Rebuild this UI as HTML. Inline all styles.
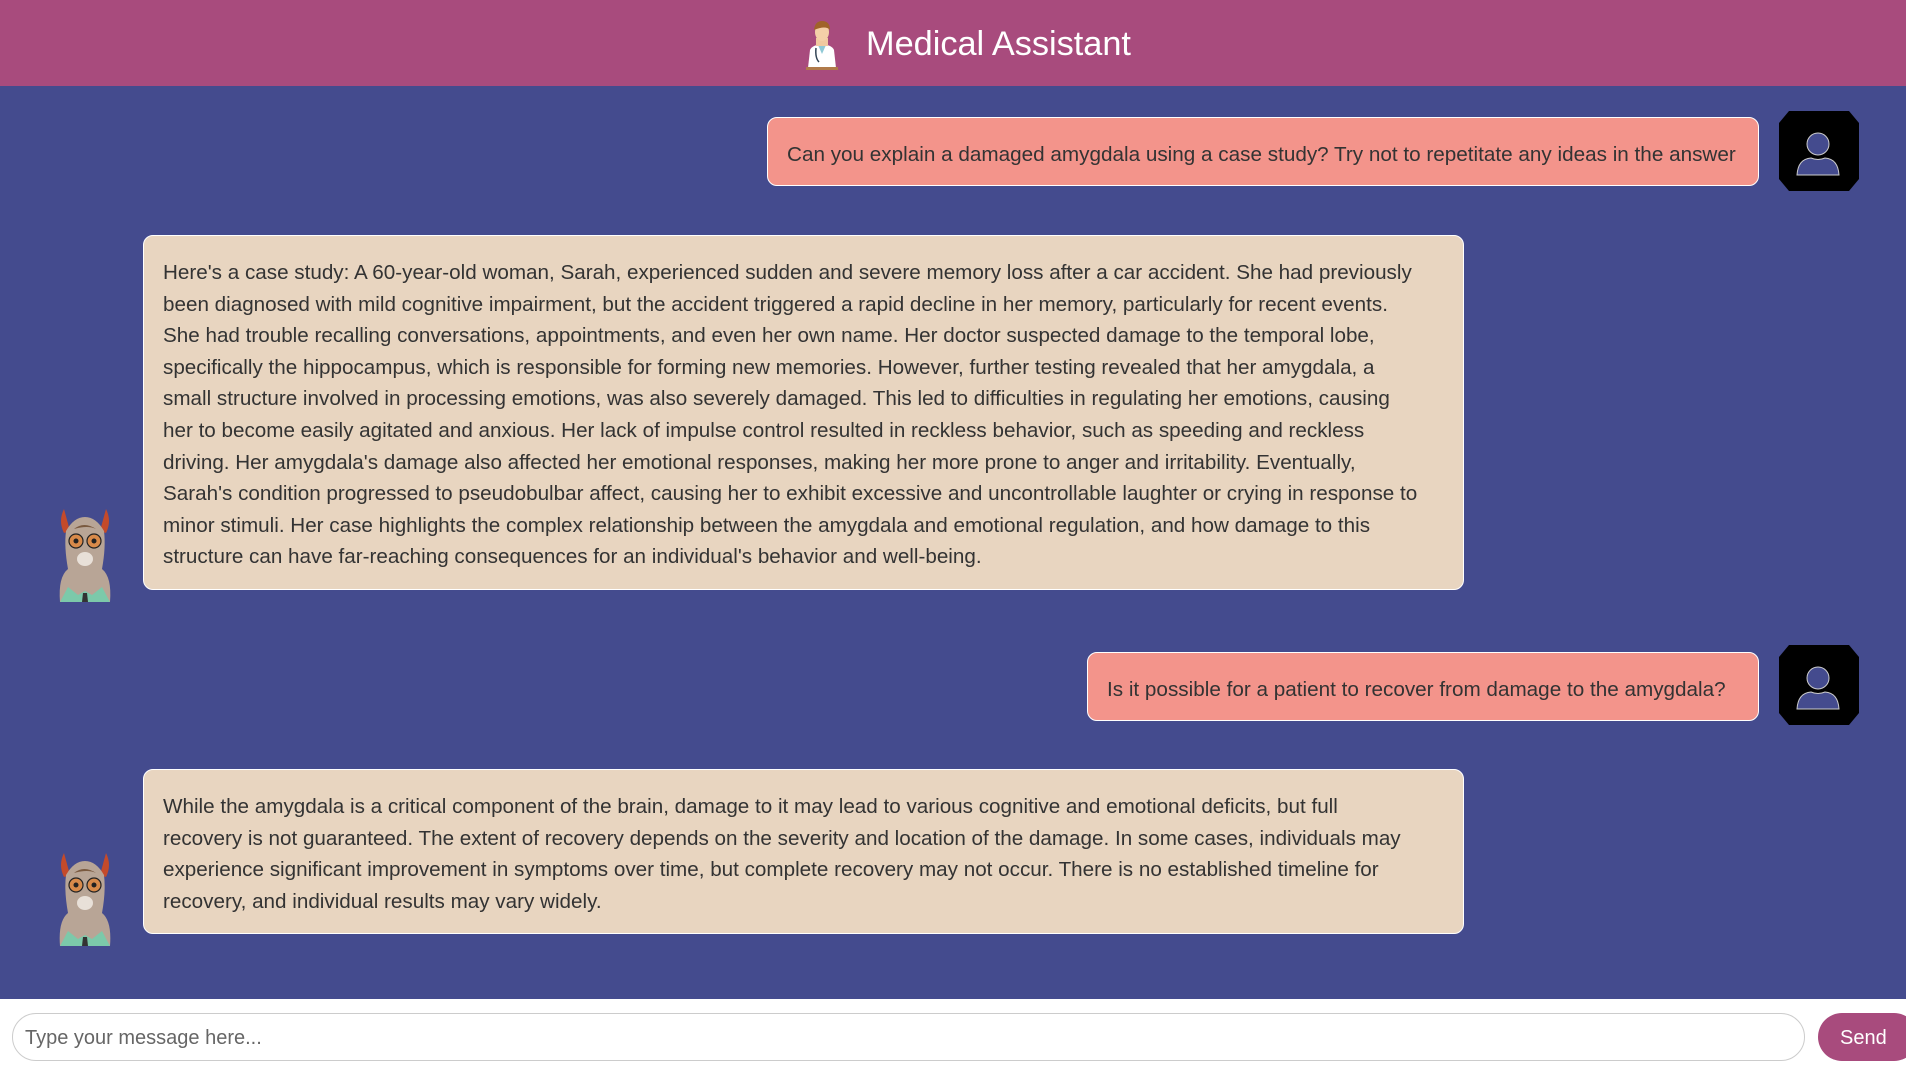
<!DOCTYPE html>
<html><head><meta charset="utf-8"><style>
*{margin:0;padding:0;box-sizing:border-box}
body{width:1906px;height:1069px;overflow:hidden;background:#fff;font-family:"Liberation Sans",sans-serif;position:relative}
.hdr{position:absolute;left:0;top:0;width:1906px;height:86px;background:#a84b7d}
.title{position:absolute;left:866px;top:22px;color:#fff;font-size:34.3px;line-height:44px}
.chat{position:absolute;left:0;top:86px;width:1906px;height:913px;background:#444b8e}
.ub{position:absolute;background:#f3948b;border:1.5px solid #fff;border-radius:10px;color:#333;font-size:20.7px;white-space:nowrap;display:flex;align-items:center;padding-left:19px;padding-top:6px}
.bb{position:absolute;background:#e8d5c0;border:1.5px solid #fff;border-radius:10px;color:#333;font-size:20.65px;line-height:31.6px;white-space:nowrap;padding:21px 0 0 19px}
.av{position:absolute;width:80px;height:80px}
.ll{position:absolute;width:62px;height:95px}
.inp{position:absolute;left:12px;top:1013px;width:1793px;height:48px;border:1.5px solid #ccc;border-radius:24px;color:#666;font-size:20px;line-height:48px;padding-left:12px}
.send{position:absolute;left:1818px;top:1013px;width:100px;height:48px;border-radius:24px;background:#a84b7d;color:#fff;font-size:20px;line-height:50px;padding-left:22px}
</style></head><body>
<div class="hdr">
<svg style="position:absolute;left:802px;top:18px" width="40" height="52" viewBox="0 0 40 52">
<path d="M6 50 L8 32 Q10 27 20 26 Q30 27 32 32 L34 50Z" fill="#fff"/>
<path d="M16 27 L20 36 L24 27Z" fill="#8fc9d6"/>
<path d="M14 30 Q13 40 17 44" stroke="#345" stroke-width="1.5" fill="none"/>
<rect x="14" y="20" width="12" height="8" fill="#f1c9a0"/>
<ellipse cx="20" cy="14" rx="7" ry="9" fill="#f4cfa8"/>
<path d="M12 12 Q13 3 20 3 Q28 3 28 12 Q24 7 12 12Z" fill="#a0632a"/>
<rect x="4" y="49" width="32" height="3" fill="#b07a4a"/>
</svg>
<div class="title">Medical Assistant</div>
</div>
<div class="chat"></div>

<div class="ub" style="left:767px;top:117px;width:992px;height:69px">Can you explain a damaged amygdala using a case study? Try not to repetitate any ideas in the answer</div>
<svg class="av" style="left:1779px;top:111px" viewBox="0 0 80 80"><path d="M10 0H70L80 12V68L70 80H10L0 68V12Z" fill="#000"/><circle cx="39" cy="33" r="11" fill="#444b8e" stroke="#ccc" stroke-width="1"/><path d="M18 64 Q19 48 32 47 Q39 50 46 47 Q59 48 60 64Z" fill="#444b8e" stroke="#ccc" stroke-width="1"/></svg>

<div class="bb" style="left:143px;top:235px;width:1321px;height:355px">Here's a case study: A 60-year-old woman, Sarah, experienced sudden and severe memory loss after a car accident. She had previously<br>been diagnosed with mild cognitive impairment, but the accident triggered a rapid decline in her memory, particularly for recent events.<br>She had trouble recalling conversations, appointments, and even her own name. Her doctor suspected damage to the temporal lobe,<br>specifically the hippocampus, which is responsible for forming new memories. However, further testing revealed that her amygdala, a<br>small structure involved in processing emotions, was also severely damaged. This led to difficulties in regulating her emotions, causing<br>her to become easily agitated and anxious. Her lack of impulse control resulted in reckless behavior, such as speeding and reckless<br>driving. Her amygdala's damage also affected her emotional responses, making her more prone to anger and irritability. Eventually,<br>Sarah's condition progressed to pseudobulbar affect, causing her to exhibit excessive and uncontrollable laughter or crying in response to<br>minor stimuli. Her case highlights the complex relationship between the amygdala and emotional regulation, and how damage to this<br>structure can have far-reaching consequences for an individual's behavior and well-being.</div>

<svg class="ll" style="left:54px;top:507px" viewBox="0 0 62 95"><g id="lm"><path d="M10 2 Q4 14 10 26 L16 24Z" fill="#c44a2a"/><path d="M52 2 Q58 14 52 26 L46 24Z" fill="#c44a2a"/><path d="M6 95 Q4 70 14 62 Q10 40 12 24 Q20 10 31 10 Q42 10 50 24 Q52 40 48 62 Q58 70 56 95Z" fill="#b8a596"/><path d="M20 22 Q30 14 42 22 Q34 18 20 22Z" fill="#7a5a40"/><circle cx="22" cy="34" r="7" fill="#d88a4a" stroke="#222" stroke-width="1.2"/><circle cx="40" cy="34" r="7" fill="#d88a4a" stroke="#222" stroke-width="1.2"/><circle cx="22" cy="34" r="2.5" fill="#222"/><circle cx="40" cy="34" r="2.5" fill="#222"/><ellipse cx="31" cy="52" rx="8" ry="7" fill="#e8e0d8"/><path d="M6 95 L14 80 L24 88 L31 84 L38 88 L48 80 L56 95Z" fill="#7cc9aa"/><path d="M29 86 L33 86 L34 95 L28 95Z" fill="#333"/></g></svg>

<div class="ub" style="left:1087px;top:652px;width:672px;height:69px">Is it possible for a patient to recover from damage to the amygdala?</div>
<svg class="av" style="left:1779px;top:645px" viewBox="0 0 80 80"><path d="M10 0H70L80 12V68L70 80H10L0 68V12Z" fill="#000"/><circle cx="39" cy="33" r="11" fill="#444b8e" stroke="#ccc" stroke-width="1"/><path d="M18 64 Q19 48 32 47 Q39 50 46 47 Q59 48 60 64Z" fill="#444b8e" stroke="#ccc" stroke-width="1"/></svg>

<div class="bb" style="left:143px;top:769px;width:1321px;height:165px">While the amygdala is a critical component of the brain, damage to it may lead to various cognitive and emotional deficits, but full<br>recovery is not guaranteed. The extent of recovery depends on the severity and location of the damage. In some cases, individuals may<br>experience significant improvement in symptoms over time, but complete recovery may not occur. There is no established timeline for<br>recovery, and individual results may vary widely.</div>

<svg class="ll" style="left:54px;top:851px" viewBox="0 0 62 95"><use href="#lm"/></svg>

<div class="inp">Type your message here...</div>
<div class="send">Send</div>
</body></html>
